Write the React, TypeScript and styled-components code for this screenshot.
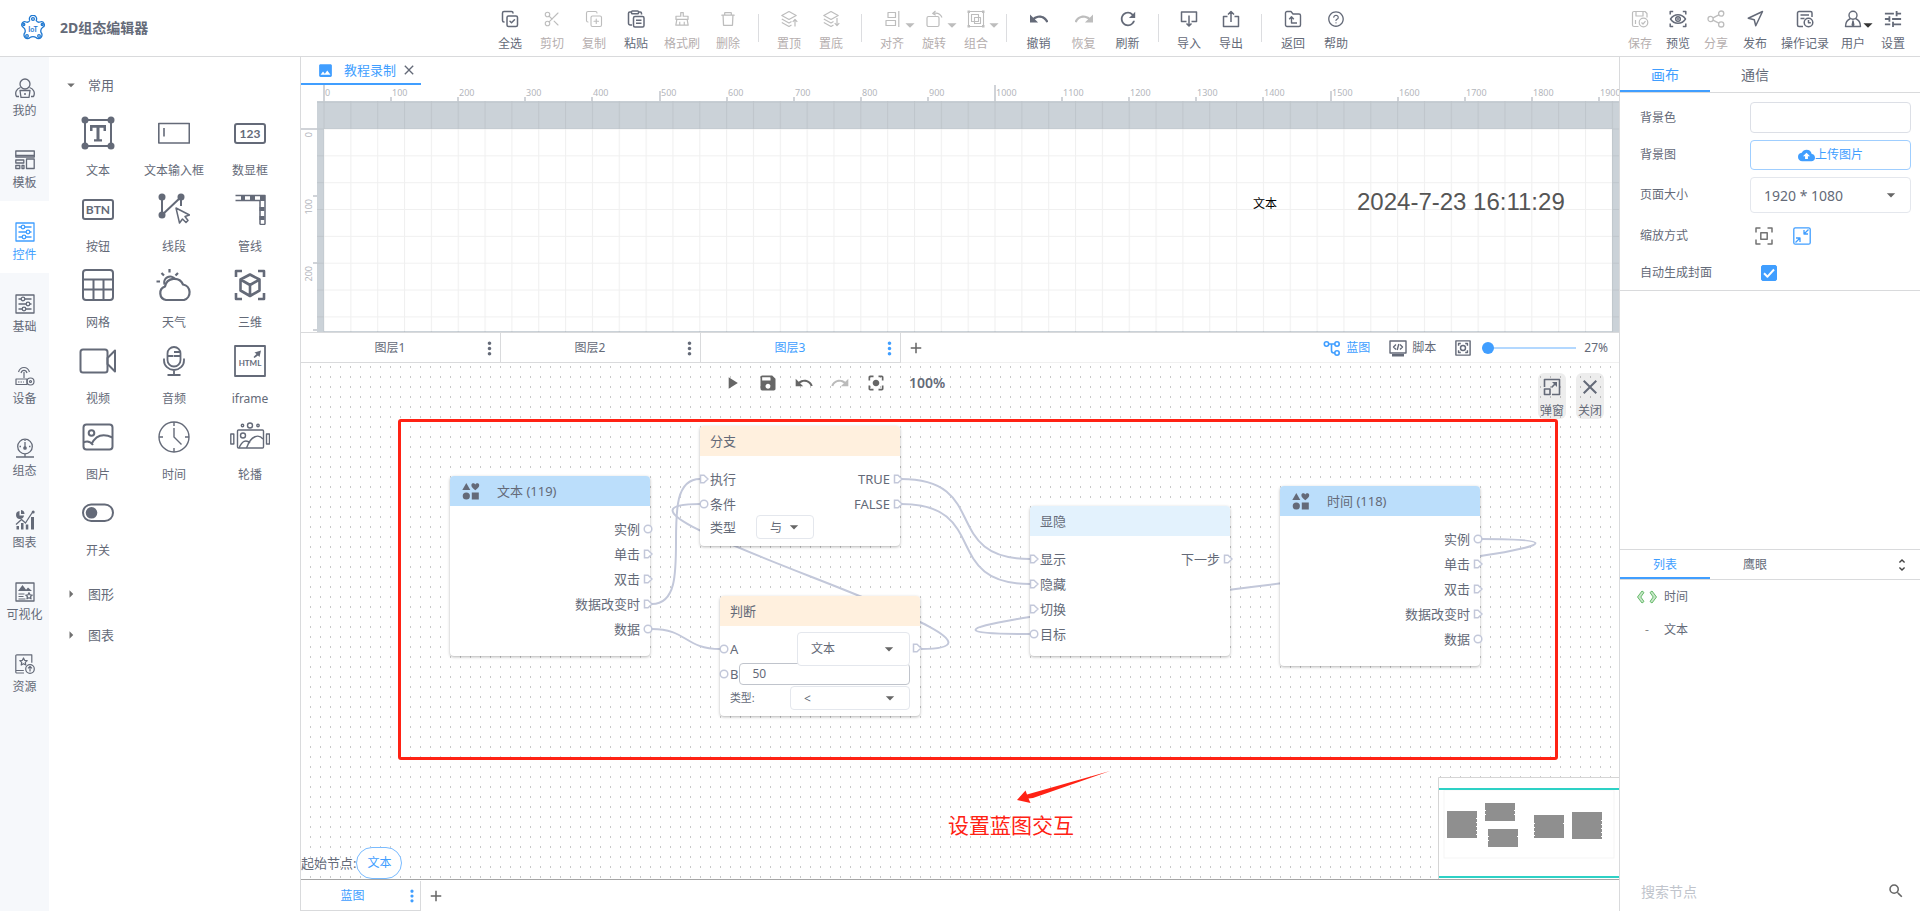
import React from "react";
import styled, { createGlobalStyle, css } from "styled-components";
import {
  MdUndo, MdRedo, MdRefresh, MdSave, MdPlayArrow, MdCloudUpload, MdSearch, MdUnfoldMore,
  MdImage, MdAdd, MdClose, MdMoreVert, MdCenterFocusStrong, MdTune, MdArrowDropDown, MdArrowRight,
} from "react-icons/md";
import { AiOutlineClear, AiOutlineDelete, AiOutlineQuestionCircle } from "react-icons/ai";
import { CopyCheck, CopyPlus, Scissors, Navigation } from "lucide-react";

const ink = "#646a78";
const blue = "#409eff";
const line = "#d9dadc";
const off = "#bdbdbd";
const wire = "#c3c8da";

const Global = createGlobalStyle`
  * { box-sizing: border-box; }
  html, body { margin: 0; background: #fff; }
  body, button, input, select { font-family: "Noto Sans", "Noto Sans CJK SC", sans-serif; color: ${ink}; }
  body { font-size: 12px; line-height: 18px; }
  button { background: none; border: 0; padding: 0; cursor: pointer; font-size: inherit; line-height: inherit; }
  button:disabled { cursor: default; }
  svg { display: block; flex: none; }
`;

/* ---------- icons ---------- */
const Stroke = styled.svg<{ $w?: number }>`
  fill: none;
  stroke: currentColor;
  stroke-width: ${(p) => p.$w ?? 1.4}px;
  stroke-linejoin: round;
  .solid { fill: currentColor; stroke: none; }
  .fill { fill: currentColor; }
  text { fill: currentColor; stroke: none; font-family: Lato, sans-serif; font-weight: 700; }
`;

type IconProps = { size?: number; box?: number; w?: number; children: React.ReactNode };
const Icon = ({ size = 18, box = 18, w, children }: IconProps) => (
  <Stroke width={size} height={size} viewBox={`0 0 ${box} ${box}`} $w={w} aria-hidden="true">{children}</Stroke>
);

const PasteIcon = () => (
  <Icon w={1.5}><path d="M5 15H3.2A1.7 1.7 0 0 1 1.5 13.300V3.200A1.200 1.200 0 0 1 2.700 2H4M12 2h1.300A1.200 1.200 0 0 1 14.500 3.200V4.500" /><rect x="4.500" y="1" width="7" height="2.800" rx=".8" /><rect x="6.500" y="6.500" width="10.500" height="10.500" rx="1.500" /><path d="M9 10.200h5.500M9 13.200h5.500" /></Icon>
);
const LayersIcon = ({ down }: { down?: boolean }) => (
  <Icon w={1.2}><path d="M9 1.500 1.800 5.500 9 9.500l7.200-4L9 1.500ZM1.800 9 9 13l2.500-1.400M1.800 12.500 9 16.500l2.500-1.400" /><path d={down ? "M15 8v7.500M12.700 13.200 15 15.500l2.300-2.300" : "M15 16.500V9.500M12.700 11.800 15 9.500l2.300 2.300"} /></Icon>
);
const AlignIcon = () => (<Icon w={1.200}><path d="M15.800 1v16M3 15.500h9.500v-5H3zM5 2.500h7.500v5H5z" /></Icon>);
const RotateIcon = () => (<Icon w={1.200}><rect x="2" y="6.500" width="12" height="10" rx="1.500" /><path d="M8 3.500c4-1 7.500.5 9 4M10.500 1 7.700 3.500l3 1.800" /></Icon>);
const GroupIcon = () => (<Icon w={1.100}><path d="M3 1.500h12M3 16.500h12M1.500 3v12M16.500 3v12" /><path className="solid" d="M.5.5h2.500V3H.5zM15 .5h2.500V3H15zM.5 15h2.500v2.500H.5zM15 15h2.500v2.500H15z" /><path d="M4.500 4.500h7v7h-7zM7.500 7.500h6v6h-6z" /></Icon>);
const ImportIcon = () => (<Icon w={1.500}><path d="M6.500 11.500H1.500V2h15v9.500h-5M9 5.500V16M6.500 13.500 9 16l2.500-2.500" /></Icon>);
const ExportIcon = () => (<Icon w={1.500}><path d="M5.500 6.500H1.500v10h15v-10h-4M9 12V1.800M6 4.500l3-3 3 3" /></Icon>);
const BackIcon = () => (<Icon w={1.400}><path d="M1.500 15V3A1.500 1.500 0 0 1 3 1.500h4L9 4h6a1.500 1.500 0 0 1 1.500 1.500V15a1.500 1.500 0 0 1-1.500 1.500H3A1.500 1.500 0 0 1 1.500 15Z" /><path d="M7.500 7v6H13M5.200 9.200 7.500 6.800l2.300 2.400" /></Icon>);
const SaveIcon = () => (<Icon w={1.200}><path d="M7.500 16.500H3A1.500 1.500 0 0 1 1.500 15V3A1.500 1.500 0 0 1 3 1.500h11L16 3.500v4M5 1.500V6h7V1.500M4.500 10v4" /><circle cx="12.500" cy="12.500" r="4.300" /><path d="m10.500 12.500 1.500 1.500 2.500-2.800" /></Icon>);
const PreviewIcon = () => (<Icon w={1.500}><path d="M1.200 4.500V1.500h3M13.800 1.500h3v3M16.800 13.500v3h-3M4.200 16.500h-3v-3" /><path d="M1.500 9C3.500 6 6 4.800 9 4.800S14.500 6 16.500 9c-2 3-4.500 4.200-7.500 4.200S3.500 12 1.500 9Z" /><circle cx="9" cy="9" r="2.300" /><circle className="solid" cx="9" cy="9" r="1" /></Icon>);
const ShareIcon = () => (<Icon w={1.300}><circle cx="3.600" cy="9" r="2.600" /><circle cx="14.200" cy="3.600" r="2.600" /><circle cx="14.200" cy="14.400" r="2.600" /><path d="M6 7.800 11.800 4.800M6 10.200l5.800 3" /></Icon>);
const LogIcon = () => (<Icon w={1.500}><path d="M7 16.500H3A1.500 1.500 0 0 1 1.500 15V3A1.500 1.500 0 0 1 3 1.500h11.500A1.500 1.500 0 0 1 16 3v4M4.500 5H13M4.500 8.500h4" /><circle cx="12.500" cy="12.500" r="4.300" /><path d="M12.500 10v2.800h2.300" /></Icon>);
const UserIcon = () => (<Icon w={1.400}><circle cx="9" cy="5.200" r="4" /><path d="M6.500 8.500C3.500 9.800 1.500 12 1.500 16.500h15c0-4.500-2-6.700-5-8" /><path className="fill" d="M9 11l-.8 4 .8.800.8-.8z" /></Icon>);

const PersonIcon = () => (<Icon size={20} box={20} w={1.300}><circle cx="10" cy="6" r="5" /><path d="M4 18.500H1.500C-.5 14.500 1.500 11 5.500 9.500M16 18.500h2.500c2-4 0-7.500-4-9" /><path d="M5 12.500h10l-1 7H6z" /><circle className="solid" cx="10" cy="16" r="1" /></Icon>);
const TemplateIcon = () => (<Icon size={20} box={20} w={1.300}><rect x=".8" y="1" width="18.500" height="6" /><path d="M.8 5.500h18.500M.8 10h8v3h-8zM.8 15.500h4v3h-4zM7 15.500h2v3H7zM11.500 9h7.700v9.500h-7.700z" /></Icon>);
const SlidersIcon = () => (<Icon size={20} box={20} w={1.300}><path d="M1 1h18v18H1zM3.500 5h3M10 5h6.500M3.500 10h7.500M15 10h1.500M3.500 15h4M11 15h5.500" /><circle cx="8" cy="5" r="1.800" /><circle cx="13" cy="10" r="1.800" /><circle cx="9" cy="15" r="1.800" /></Icon>);
const DeviceIcon = () => (<Icon size={20} box={20} w={1.200}><path d="M3.500 6C5.500 0 12.500 0 14.500 6M6 7c1-3.500 5-3.500 6 0M9 6v6M1 13h11v5.500H1z" /><path d="M3 16h6" strokeDasharray="1.500 1" /><circle cx="15.500" cy="15.500" r="3.500" /><circle cx="15.500" cy="15.500" r="1" /></Icon>);
const GaugeIcon = () => (<Icon size={20} box={20} w={1.300}><circle cx="10" cy="8.500" r="7.300" /><path d="M10 4v5M10 3v-1M4.500 8.500h1.500M14 8.500h1.500M1 19h18M10 16v3" /><circle cx="10" cy="10" r="1.200" className="fill" /></Icon>);
const ChartIcon = () => (<Icon size={20} box={20} w={1.300}><path className="solid" d="M4.500 1A4 4 0 1 0 9 5.500H4.500zM6 0v4h3.500A4 4 0 0 0 6 0zM1.500 16h2.500v3.500H1.500zM6 13h2.500v6.500H6zM10.800 14.500h2.500v5h-2.500zM16 7h3v12.500h-3z" /><path d="M1 14.500 6.500 9.500l4 3.500L14 7.500l4-6" /><circle className="solid" cx="18.200" cy="2" r="1.500" /></Icon>);
const VisualIcon = () => (<Icon size={20} box={20} w={1.300}><path d="M1 1h18v18H1z" /><path className="solid" d="M3 9l4.500-6L12 9zM10 9l3-3.500L17 9zM3.500 11.500h6v1h-6zM3.500 14h5v1h-5zM3.500 16.500h7v1h-7z" /><path d="m14 10.800 1 2 2.200.3-1.600 1.500.4 2.200-2-1.100-2 1.100.4-2.200-1.600-1.500 2.200-.3z" /></Icon>);
const ResourceIcon = () => (<Icon size={20} box={20} w={1.200}><path d="M9 19H1.500A1 1 0 0 1 .8 18V1.800A1 1 0 0 1 1.800.8h15v8M.8 16.500h8" /><path d="m8.500 4 1.100 2.300 2.600.3-1.900 1.800.5 2.600-2.300-1.300L6.200 11l.5-2.600-1.900-1.800 2.600-.3z" /><circle cx="15" cy="15" r="4.300" /><path d="M15 17.500v-5M13 14.300l2-2 2 2" /></Icon>);

const W = ({ w = 2, children }: { w?: number; children: React.ReactNode }) => <Icon size={32} box={32} w={w}>{children}</Icon>;
const widgets: { name: string; icon: React.ReactNode }[] = [
  { name: "文本", icon: <Icon size={34} box={34} w={2}><path d="M4 4h26v26H4z" /><g className="solid"><circle cx="4" cy="4" r="3.500" /><circle cx="30" cy="4" r="3.500" /><circle cx="4" cy="30" r="3.500" /><circle cx="30" cy="30" r="3.500" /></g><path className="solid" d="M9 9h16v6h-2.500v-3.200h-4v11.400h2.500V25.500h-8v-2.300h2.500V11.800h-4V15H9z" /></Icon> },
  { name: "文本输入框", icon: <W w={1.600}><path d="M.8 6.500h30.500v19.500H.8zM6 11v8.500" /></W> },
  { name: "数显框", icon: <W><rect x="1" y="7" width="30" height="19" rx="2" /><text x="16" y="21" fontSize="12" textAnchor="middle">123</text></W> },
  { name: "按钮", icon: <W><rect x="1" y="7" width="30" height="19" rx="2" /><text x="16" y="21" fontSize="12" textAnchor="middle">BTN</text></W> },
  { name: "线段", icon: <W w={2}><path d="M4 4v18L23 4v9" /><g className="solid"><circle cx="4" cy="4" r="3.500" /><circle cx="23" cy="4" r="3.500" /><circle cx="4" cy="22" r="3.500" /></g><path d="m18 15 3.500 15 3-4 3.500 3.500 2-2-3-4 4.500-1.500z" fill="#fff" strokeWidth="1.500" /></W> },
  { name: "管线", icon: <W w={1.500}><path d="M1.500 2.500H31v29M1.500 7.500h24.500v24" /><path d="M26 31.500h5" /><path className="solid" d="M7 2h4v6H7zM16 2h5v6h-5zM26 2h5v6h-5zM25.500 14h5v4h-5zM25.500 23h5v4h-5z" /></W> },
  { name: "网格", icon: <W><rect x="1" y="1" width="30" height="30" rx="3" /><path d="M1 10.500h30M1 20.500h30M11.500 10.500V31M21.500 10.500V31" /></W> },
  { name: "天气", icon: <Icon size={36} box={36} w={2.200}><path d="M10 33a7 7 0 0 1-1-13.500A9.500 9.500 0 0 1 27 17.500a8 8 0 0 1 1 15.500z" /><path d="M8.500 17.500a6 6 0 0 1 10.500-5.500M13.500 2v3.500M5.500 6l2.500 2.500M22 6l-2.500 2.500M.5 14.500H4" /></Icon> },
  { name: "三维", icon: <W w={2.600}><path d="M2 8V2h6M24 2h6v6M30 24v6h-6M8 30H2v-6" /><path d="m16 5.500 9.500 5v11L16 27l-9.500-5.500v-11zM6.500 10.500 16 16l9.500-5.500M16 16v11" /></W> },
  { name: "视频", icon: <Icon size={38} box={38} w={2}><rect x="1.500" y="7.500" width="27" height="23" rx="2.500" /><path d="m28.500 16 7.500-7.500v21L28.500 22z" /></Icon> },
  { name: "音频", icon: <W w={1.800}><rect x="9.500" y="2" width="13" height="19.500" rx="6.500" /><path d="M6 13.500v2a10 9.500 0 0 0 20 0v-2M16 25v4.500M9.500 30h13M9.500 11h6M16 11h6M16 7h6" /></W> },
  { name: "iframe", icon: <W w={1.800}><path d="M1 1h30v30H1z" /><text x="16" y="21" fontSize="8" textAnchor="middle">HTML</text><path className="solid" d="M20.500 7.500 27 5.500l-1.500 6.500-1.500-1.500-3.500 2.500-1-1 3-3z" /></W> },
  { name: "图片", icon: <W><rect x="1.500" y="3.500" width="29" height="25" rx="3" /><circle cx="9.500" cy="12" r="2.800" /><path d="M1.500 21.500C5 19.500 8 20 11 24M9.500 23C14 14 21 12 30.500 16.500" /></W> },
  { name: "时间", icon: <W w={1.400}><circle cx="16" cy="16" r="15" /><path d="M16 1v4M16 27v4M1 16h4M27 16h4M16 7v9l7.500 7.500" /></W> },
  { name: "轮播", icon: <Icon size={40} box={40} w={1.400}><rect x="7.500" y="13" width="26" height="18" rx="1" /><path d="M.8 17h3v10h-3zM36.500 17h3v10h-3zM9 31c3-7 7-9 11-5M16.500 31C21 18 29 17 33 22" /><circle cx="13" cy="18.500" r="2.500" /><circle cx="20" cy="8.500" r="2.500" /><circle cx="12.500" cy="8.500" r="1.200" /><circle cx="28" cy="8.500" r="1.200" /></Icon> },
  { name: "开关", icon: <W><rect x="1" y="7.500" width="30" height="16.500" rx="8.200" /><circle className="solid" cx="9.500" cy="15.800" r="5.800" /></W> },
];

const ShapesIcon = () => (
  <Icon size={18} box={18}><path className="solid" d="M4.300 1 8.300 8H.3zM13.300 8.200C10.500 6 9.400 5 9.400 3.200 9.400 1 12.300.6 13.300 2.600c1-2 3.900-1.600 3.900.6 0 1.800-1.100 2.800-3.900 5zM9.800 10.500h7v7h-7z" /><circle className="solid" cx="4.300" cy="14" r="3.600" /></Icon>
);
const FlowIcon = () => (<Icon w={1.600}><circle cx="3.500" cy="5" r="2.200" /><circle cx="14" cy="5" r="2.200" /><circle cx="14" cy="14" r="2.200" /><path d="M5.700 5h6M8.500 5v6.500a2.500 2.500 0 0 0 2.500 2.500h1" /></Icon>);
const ScriptIcon = () => (<Icon w={1.400}><path d="M1 2h16v12H1zM7 5.500 4.500 8 7 10.500M11 5.500 13.500 8 11 10.500M9.800 5l-1.600 6" /><path className="solid" d="M3 15h12v2.500H3z" /></Icon>);
const FitIcon = () => (<Icon size={16} box={18} w={1.600}><path d="M1 1h16v16H1z" /><circle cx="9" cy="9" r="2.800" /><path d="M4 6.500V4h2.500M11.500 4H14v2.500M14 11.500V14h-2.500M6.500 14H4v-2.500" /></Icon>);

/* ---------- shell ---------- */
const Page = styled.div`display: flex; flex-direction: column; height: 100vh; min-height: 720px; overflow: hidden;`;
const Header = styled.header`
  display: grid; grid-template-columns: 489px 1fr auto; height: 57px; flex: none; border-bottom: 1px solid ${line};
`;
const Brand = styled.div`display: flex; align-items: center; gap: 14px; padding: 0 20px; h1 { font-size: 14px; line-height: 20px; margin: 0; }`;
const Tools = styled.nav`display: flex; align-items: flex-start;`;
const Actions = styled(Tools)`padding-right: 5px;`;
const Divider = styled.span`width: 1px; height: 28px; margin: 14px 9px 0; background: #dcdde0;`;
const Tool = styled.button<{ $w?: number }>`
  position: relative; display: flex; flex-direction: column; align-items: center; gap: 7px;
  width: ${(p) => p.$w ?? 42}px; padding-top: 10px; white-space: nowrap;
  &:disabled { color: ${off}; }
  &:disabled span { color: #b5aeae; }
`;
const Caret = styled(MdArrowDropDown)`position: absolute; right: -8px; top: 14px;`;
const Body = styled.div`display: flex; flex: 1; min-height: 0;`;

const Rail = styled.nav`width: 49px; flex: none; background: #f6f8fb;`;
const RailItem = styled.button<{ $on?: boolean }>`
  display: flex; flex-direction: column; align-items: center; gap: 4px; width: 100%; height: 72px; padding-top: 21px;
  ${(p) => p.$on && css`background: #fff; color: ${blue};`}
`;

const Library = styled.aside`width: 252px; flex: none; border-right: 1px solid ${line};`;
const Category = styled.button`
  display: flex; align-items: center; gap: 8px; width: 100%; height: 41px; padding-left: 13px; font-size: 13px;
  svg { color: #707070; }
`;
const LibraryTop = styled.div`padding-top: 7px;`;
const WidgetGrid = styled.div`display: grid; grid-template-columns: repeat(3, 76px); padding: 8px 10px 4px 11px;`;
const Widget = styled.button`
  display: flex; flex-direction: column; align-items: center; height: 76px;
  span { display: flex; align-items: center; justify-content: center; height: 40px; margin-bottom: 9px; }
`;

const Main = styled.main`display: flex; flex-direction: column; flex: 1; min-width: 0;`;
const FileTab = styled.div`
  display: flex; align-items: center; width: 120px; height: 28px; flex: none; padding-left: 16px; border-bottom: 2px solid ${blue};
  color: ${blue}; font-size: 13px; white-space: nowrap;
  span { margin-left: 10px; }
`;
const CloseFile = styled.button`margin: 0 4px 0 auto;`;

/* ---------- stage ---------- */
const Stage = styled.section`display: flex; flex-direction: column; flex: 12 1 0; min-height: 0; border-bottom: 1px solid ${line};`;
const StageRow = styled.div`display: flex; flex: 1; min-height: 0;`;
const RulerSvg = styled.svg`
  rect { fill: #d0d3d8; }
  text { fill: #b4b6bc; font-size: 9px; }
`;
const Board = styled.div`position: relative; display: flex; flex: 1; padding: 28px 7px 1px; background: #cbd2d8;`;
const Sheet = styled.div`flex: 1; background: #fff;`;
const GridOverlay = styled.svg`position: absolute; inset: 0; width: 100%; height: 100%;`;
const StageText = styled.span`position: absolute; left: 936px; top: 94px; color: #000;`;
const StageClock = styled.time`position: absolute; left: 1040px; top: 86px; font: 24px/30px "Liberation Sans", sans-serif; color: #555;`;

const STEP = 67.1;
const TopRuler = () => (
  <RulerSvg width="100%" height="16">
    {Array.from({ length: 20 }, (_, i) => {
      const x = Math.round(22 + i * STEP);
      const h = i % 10 === 0 ? 16 : i % 5 === 0 ? 10 : 4;
      return <g key={i}><rect x={x} y={16 - h} width="2" height={h} /><text x={x + 2} y="11">{i * 100}</text></g>;
    })}
  </RulerSvg>
);
const SideRuler = () => (
  <RulerSvg width="16" height="100%">
    {Array.from({ length: 4 }, (_, i) => {
      const y = Math.round(27 + i * STEP);
      const w = i === 0 ? 16 : 4;
      return (
        <g key={i}>
          <rect x={16 - w} y={y} width={w} height="2" />
          {i < 3 && <text transform={`translate(11 ${y + 4}) rotate(-90)`} textAnchor="end">{i * 100}</text>}
        </g>
      );
    })}
  </RulerSvg>
);

/* ---------- layer bar ---------- */
const LayerBar = styled.div`display: flex; align-items: center; height: 30px; flex: none; border-bottom: 1px solid #f0f0f0;`;
const TabCell = styled.div<{ $w: number; $on?: boolean }>`
  display: flex; align-items: center; width: ${(p) => p.$w}px; height: 30px; padding-top: 2px; border-right: 1px solid ${line}; border-bottom: 1px solid ${line};
  color: ${(p) => (p.$on ? blue : ink)};
  button { color: inherit; }
  button:first-child { flex: 1; }
`;
const AddButton = styled.button`margin-left: 6px; color: #666;`;
const BarTools = styled.div`display: flex; align-items: center; margin-left: auto; padding: 1px 11px 0 0;`;
const BarTool = styled.button<{ $on?: boolean }>`
  display: flex; align-items: center; gap: 5px; margin-right: 19px; color: ${(p) => (p.$on ? blue : ink)};
`;
const Zoom = styled.input`
  appearance: none; width: 94px; height: 12px; margin: 0 8px 0 -8px; background: linear-gradient(#b3d8ff, #b3d8ff) center / 100% 2px no-repeat;
  &::-webkit-slider-thumb { appearance: none; width: 12px; height: 12px; border-radius: 50%; background: ${blue}; }
`;

/* ---------- blueprint ---------- */
const Blueprint = styled.section`position: relative; flex: 25 1 0; min-height: 0; overflow: hidden; border-bottom: 1px solid #a5a5a5;`;
const Wires = styled.svg`
  position: absolute; inset: 0; width: 100%; height: 100%;
  path { fill: none; stroke: ${wire}; stroke-width: 2px; }
  pattern rect { fill: #c9c9c9; }
`;
const CanvasTools = styled.div`
  position: absolute; left: 421px; top: 10px; display: flex; align-items: center; gap: 16px; color: #666;
  button { color: inherit; }
  button:disabled { color: #bbb; }
  strong { margin-left: 7px; font-size: 14px; line-height: 20px; font-weight: 600; color: ${ink}; }
`;
const CornerTools = styled.div`position: absolute; right: 15px; top: 10px; display: flex; gap: 10px;`;
const CornerTool = styled.button`
  display: flex; flex-direction: column; align-items: center; gap: 6px; width: 28px; height: 46px; padding-top: 5px; border-radius: 6px; background: rgba(0, 0, 0, 0.07);
`;
const NodeCard = styled.article<{ $x: number; $y: number; $h: number }>`
  position: absolute; left: ${(p) => p.$x}px; top: ${(p) => p.$y}px; width: 200px; min-height: ${(p) => p.$h}px;
  background: #fff; border-radius: 4px; box-shadow: 0 1px 3px rgba(0, 0, 0, 0.3); font-size: 13px;
`;
const NodeHead = styled.header<{ $tone: string }>`
  display: flex; align-items: center; gap: 17px; height: 30px; padding: 0 10px; background: ${(p) => p.$tone}; border-radius: 4px 4px 0 0;
`;
const ElementHead = styled(NodeHead)`padding-left: 12px;`;
const NodeBody = styled.div`display: flex; justify-content: space-between; padding-top: 10px;`;
const Ports = styled.div<{ $end?: boolean }>`
  display: flex; flex-direction: column; align-items: ${(p) => (p.$end ? "flex-end" : "stretch")};
  margin: ${(p) => (p.$end ? "0 -3px 0 0" : "0 0 0 -1px")};
`;
const PortRow = styled.div`display: flex; align-items: center; height: 25px; svg { margin-right: 1px; }`;
const OutRow = styled(PortRow)`gap: 3px; svg { margin: 0; }`;
const SettingRow = styled.div`display: flex; align-items: center; height: 24px; padding: 0 10px; justify-content: space-between;`;
const BranchRow = styled(SettingRow)`height: 22px; justify-content: flex-start; gap: 20px; svg { right: 6px; }`;
const PortShape = styled.svg`fill: #fff; stroke: ${wire}; stroke-width: 1.5px;`;
const Port = ({ kind }: { kind: "data" | "flow" }) => (
  <PortShape width="10" height="10" viewBox="0 0 10 10">
    {kind === "data" ? <circle cx="5" cy="5" r="3.800" /> : <path d="M1.500 1.200h3.500L9 5 5 8.800H1.500z" />}
  </PortShape>
);
type P = [string, "data" | "flow"];
const InPort = ({ p }: { p: P }) => <PortRow><Port kind={p[1]} /><span>{p[0]}</span></PortRow>;
const OutPorts = ({ list }: { list: P[] }) => (
  <Ports $end>{list.map((p) => <OutRow key={p[0]}><span>{p[0]}</span><Port kind={p[1]} /></OutRow>)}</Ports>
);

const SelectBox = styled.label<{ $w: string; $h: number; $size?: number }>`
  position: relative; display: flex; align-items: center; width: ${(p) => p.$w}; height: ${(p) => p.$h}px; flex: none;
  border: 1px solid #e4e7ed; border-radius: 4px; background: #fff;
  select { appearance: none; width: 100%; height: 100%; border: 0; background: none; outline: 0; padding: 0 24px 0 13px; font-size: ${(p) => p.$size ?? 12}px; }
  svg { position: absolute; right: 9px; color: #666; pointer-events: none; }
`;
const Select = ({ name, value, w, h, size }: { name: string; value: string; w: string; h: number; size?: number }) => (
  <SelectBox $w={w} $h={h} $size={size}>
    <select aria-label={name} defaultValue={value}><option>{value}</option></select>
    <MdArrowDropDown size={20} />
  </SelectBox>
);
const JudgeBody = styled.div`padding: 10px 10px 0 0; margin-left: -1px;`;
const JudgeRow = styled(PortRow)``;
const Push = styled.div`display: flex; margin-left: auto;`;
const ValueInput = styled.input`flex: 1; min-width: 0; height: 22px; margin-left: 1px; padding: 0 12px; border: 1px solid #c0c4cc; border-radius: 4px; font-size: 12px; background: #fff;`;
const JudgeOut = styled.div`position: absolute; right: -2px; top: 47px;`;

const Frame = styled.div`position: absolute; left: 97px; top: 56px; width: 1160px; height: 341px; border: 3px solid #ff2214; border-radius: 3px; pointer-events: none;`;
const NoteArrow = styled.svg`position: absolute; left: 714px; top: 406px; fill: #ff2214;`;
const Note = styled.p`position: absolute; left: 647px; top: 447px; margin: 0; font-size: 21px; line-height: 30px; color: #ff2214;`;
const StartNode = styled.div`position: absolute; left: 0; bottom: 0; display: flex; align-items: center; font-size: 13px;`;
const Pill = styled.button`width: 46px; height: 32px; border: 1px solid #79bbff; border-radius: 16px; color: ${blue}; background: #fff; font-size: 12px;`;
const MiniMap = styled.svg`position: absolute; right: 0; bottom: 0; background: #fff;`;

const ElementNode = ({ x, y, title }: { x: number; y: number; title: string }) => (
  <NodeCard $x={x} $y={y} $h={180}>
    <ElementHead $tone="#bbdefb"><ShapesIcon />{title}</ElementHead>
    <NodeBody><span /><OutPorts list={[["实例", "data"], ["单击", "flow"], ["双击", "flow"], ["数据改变时", "flow"], ["数据", "data"]]} /></NodeBody>
  </NodeCard>
);

const BottomBar = styled.div`display: flex; align-items: center; height: 31px; flex: none;`;

/* ---------- right panel ---------- */
const Side = styled.aside`display: flex; flex-direction: column; width: 301px; flex: none; border-left: 1px solid ${line};`;
const Props = styled.section`flex: 15 1 0; min-height: 0;`;
const List = styled.section`display: flex; flex-direction: column; flex: 11 1 0; min-height: 0; border-top: 1px solid ${line};`;
const Tabs = styled.div<{ $h: number; $size: number }>`
  display: flex; align-items: stretch; height: ${(p) => p.$h}px; flex: none; border-bottom: 1px solid ${line}; font-size: ${(p) => p.$size}px;
`;
const Tab = styled.button<{ $on?: boolean }>`
  width: 90px; padding-top: 2px; border-bottom: 2px solid ${(p) => (p.$on ? blue : "transparent")}; color: ${(p) => (p.$on ? blue : ink)};
`;
const Expand = styled.button`margin-left: auto; padding-right: 10px; color: #444;`;
const Form = styled.div`display: flex; flex-direction: column; gap: 7px; padding: 9px 9px 3px 20px; border-bottom: 1px solid ${line};`;
const Field = styled.div<{ $h: number }>`
  display: grid; grid-template-columns: 110px 1fr; align-items: center; height: ${(p) => p.$h}px;
`;
const ColorInput = styled.input`width: 100%; height: 31px; border: 1px solid #dcdfe6; border-radius: 4px; background: #fff;`;
const Upload = styled.button`display: flex; align-items: center; justify-content: center; width: 100%; height: 30px; border: 1px solid #9fceff; border-radius: 4px; color: ${blue};`;
const ScaleModes = styled.div`display: flex; gap: 20px; padding-left: 5px;`;
const ScaleMode = styled.button<{ $on?: boolean }>`color: ${(p) => (p.$on ? blue : "#737373")};`;
const CheckWrap = styled.span`
  position: relative; width: 16px; height: 16px; margin-left: 11px;
  input { appearance: none; display: block; width: 16px; height: 16px; margin: 0; border: 1px solid ${blue}; border-radius: 2px; background: #fff; }
  input:checked { background: ${blue}; }
  svg { position: absolute; inset: 0; color: #fff; pointer-events: none; }
`;
const Items = styled.ul`list-style: none; margin: 0; padding: 0; flex: 1;`;
const Item = styled.li`display: flex; align-items: center; gap: 6px; height: 33px; padding-left: 16px; i { width: 22px; text-align: center; font-style: normal; color: #888; }`;
const CodeMark = styled.svg`fill: #c8e6c9; stroke: #66bb6a; stroke-width: 1px;`;
const SearchBox = styled.label`
  display: flex; align-items: center; height: 40px; padding: 0 15px 0 21px; color: #666;
  input { flex: 1; min-width: 0; border: 0; outline: 0; padding: 0; font-size: 14px; }
  input::placeholder { color: #c0c4cc; }
`;

type ToolDef = { name: string; icon: React.ReactNode; disabled?: boolean; w?: number; menu?: boolean };
const ToolItem = ({ name, icon, disabled, w, menu }: ToolDef) => (
  <Tool disabled={disabled} $w={w}>{icon}<span>{name}</span>{menu && <Caret size={22} color={disabled ? off : "#333"} />}</Tool>
);

/* Material glyphs carry inner padding, so they are drawn from a tighter view box. */
const tight = "2 2 20 20";
const groups: ToolDef[][] = [
  [
    { name: "全选", icon: <CopyCheck size={18} strokeWidth={2} /> },
    { name: "剪切", icon: <Scissors size={18} strokeWidth={1.500} />, disabled: true },
    { name: "复制", icon: <CopyPlus size={18} strokeWidth={1.500} />, disabled: true },
    { name: "粘贴", icon: <PasteIcon /> },
    { name: "格式刷", icon: <AiOutlineClear size={18} />, disabled: true, w: 50 },
    { name: "删除", icon: <AiOutlineDelete size={18} />, disabled: true },
  ],
  [
    { name: "置顶", icon: <LayersIcon />, disabled: true },
    { name: "置底", icon: <LayersIcon down />, disabled: true },
  ],
  [
    { name: "对齐", icon: <AlignIcon />, disabled: true, menu: true },
    { name: "旋转", icon: <RotateIcon />, disabled: true, menu: true },
    { name: "组合", icon: <GroupIcon />, disabled: true, menu: true },
  ],
  [
    { name: "撤销", icon: <MdUndo size={18} viewBox={tight} />, w: 45 },
    { name: "恢复", icon: <MdRedo size={18} viewBox={tight} />, disabled: true, w: 45 },
    { name: "刷新", icon: <MdRefresh size={18} viewBox={tight} />, w: 43 },
  ],
  [{ name: "导入", icon: <ImportIcon /> }, { name: "导出", icon: <ExportIcon /> }],
  [{ name: "返回", icon: <BackIcon />, w: 44 }, { name: "帮助", icon: <AiOutlineQuestionCircle size={18} /> }],
];
const actions: ToolDef[] = [
  { name: "保存", icon: <SaveIcon />, disabled: true, w: 38 },
  { name: "预览", icon: <PreviewIcon />, w: 38 },
  { name: "分享", icon: <ShareIcon />, disabled: true, w: 38 },
  { name: "发布", icon: <Navigation size={18} />, w: 40 },
  { name: "操作记录", icon: <LogIcon />, w: 60 },
  { name: "用户", icon: <UserIcon />, w: 36, menu: true },
  { name: "设置", icon: <MdTune size={18} viewBox={tight} />, w: 44 },
];

const rail = [
  { name: "我的", icon: <PersonIcon /> }, { name: "模板", icon: <TemplateIcon /> }, { name: "控件", icon: <SlidersIcon /> },
  { name: "基础", icon: <SlidersIcon /> }, { name: "设备", icon: <DeviceIcon /> }, { name: "组态", icon: <GaugeIcon /> },
  { name: "图表", icon: <ChartIcon /> }, { name: "可视化", icon: <VisualIcon /> }, { name: "资源", icon: <ResourceIcon /> },
];

const LogoSvg = styled.svg`
  fill: none; stroke: #1f78d1; stroke-width: 1.300px;
  text { fill: #1f78d1; stroke: none; font: 700 7px Lato, sans-serif; }
`;
const Logo = () => (
  <LogoSvg width="26" height="26" viewBox="0 0 26 26" aria-hidden="true">
    <path d="M9.800 5.500A3.600 3.600 0 1 1 16.200 5.500C17 7 18.500 7.500 20 7A3 3 0 1 1 22.500 12.500C21 13.500 20.500 15.500 21 17.500A3.300 3.300 0 1 1 16 22.500C14.500 21.500 11.500 21.500 10 22.500A3.300 3.300 0 1 1 5 17.500C5.500 15.500 5 13.500 3.500 12.500A3 3 0 1 1 6 7C7.500 7.500 9 7 9.800 5.500" />
    <circle cx="13" cy="4" r="1.400" /><circle cx="3.800" cy="9.500" r="1" /><circle cx="22.200" cy="9.500" r="1" /><circle cx="7" cy="21" r="1.300" /><circle cx="19" cy="21" r="1.300" />
    <text x="13" y="16.500" textAnchor="middle">IoT</text>
  </LogoSvg>
);

export default function App() {
  return (
    <Page>
      <Global />
      <Header>
        <Brand><Logo /><h1>2D组态编辑器</h1></Brand>
        <Tools aria-label="编辑">
          {groups.map((g, i) => (
            <React.Fragment key={i}>{i > 0 && <Divider />}{g.map((t) => <ToolItem key={t.name} {...t} />)}</React.Fragment>
          ))}
        </Tools>
        <Actions>{actions.map((t) => <ToolItem key={t.name} {...t} />)}</Actions>
      </Header>
      <Body>
        <Rail>{rail.map((r) => <RailItem key={r.name} $on={r.name === "控件"}>{r.icon}<span>{r.name}</span></RailItem>)}</Rail>
        <Library>
          <LibraryTop><Category><MdArrowDropDown size={18} />常用</Category></LibraryTop>
          <WidgetGrid>{widgets.map((w) => <Widget key={w.name}><span>{w.icon}</span>{w.name}</Widget>)}</WidgetGrid>
          <Category><MdArrowRight size={18} />图形</Category>
          <Category><MdArrowRight size={18} />图表</Category>
        </Library>

        <Main>
          <FileTab><MdImage size={17} /><span>教程录制</span><CloseFile aria-label="close"><MdClose size={16} /></CloseFile></FileTab>
          <Stage>
            <TopRuler />
            <StageRow>
              <SideRuler />
              <Board>
                <Sheet />
                <GridOverlay>
                  <defs><pattern id="cells" x="6.500" y="27.500" width="26.840" height="26.840" patternUnits="userSpaceOnUse"><path d="M0 .5h27M.5 0v27" stroke="rgba(0,0,0,.06)" /></pattern></defs>
                  <rect width="100%" height="100%" fill="url(#cells)" />
                </GridOverlay>
                <StageText>文本</StageText>
                <StageClock>2024-7-23 16:11:29</StageClock>
              </Board>
            </StageRow>
          </Stage>

          <LayerBar>
            {["图层1", "图层2", "图层3"].map((n) => (
              <TabCell key={n} $w={200} $on={n === "图层3"}><button>{n}</button><button aria-label="menu"><MdMoreVert size={21} /></button></TabCell>
            ))}
            <AddButton aria-label="add"><MdAdd size={18} /></AddButton>
            <BarTools>
              <BarTool $on><FlowIcon />蓝图</BarTool>
              <BarTool><ScriptIcon />脚本</BarTool>
              <BarTool aria-label="fit"><FitIcon /></BarTool>
              <Zoom type="range" min={0} max={100} defaultValue={0} aria-label="zoom" />
              <span>27%</span>
            </BarTools>
          </LayerBar>

          <Blueprint>
            <Wires>
              <defs><pattern id="dots" x="9" y="3" width="10" height="10" patternUnits="userSpaceOnUse"><rect width="1" height="2" /></pattern></defs>
              <rect width="100%" height="100%" fill="url(#dots)" />
              <path d="M351 241C399 241 351 116 399 116" />
              <path d="M351 266C386 266 384 286 419 286" />
              <path d="M620 286C770 286 249 141 399 141" />
              <path d="M600 116C690 116 639 196 729 196" />
              <path d="M600 141C690 141 639 221 729 221" />
              <path d="M1180 176C1480 176 429 271 729 271" />
            </Wires>

            <ElementNode x={149} y={113} title="文本 (119)" />
            <NodeCard $x={399} $y={63} $h={120}>
              <NodeHead $tone="#fff0de">分支</NodeHead>
              <NodeBody>
                <Ports><InPort p={["执行", "flow"]} /><InPort p={["条件", "data"]} /></Ports>
                <OutPorts list={[["TRUE", "flow"], ["FALSE", "flow"]]} />
              </NodeBody>
              <BranchRow><span>类型</span><Select name="类型" value="与" w="58px" h={24} /></BranchRow>
            </NodeCard>
            <NodeCard $x={419} $y={233} $h={120}>
              <NodeHead $tone="#fff0de">判断</NodeHead>
              <JudgeBody>
                <JudgeRow><Port kind="data" />A<Push><Select name="A" value="文本" w="113px" h={34} /></Push></JudgeRow>
                <JudgeRow><Port kind="data" />B<ValueInput aria-label="B" defaultValue="50" /></JudgeRow>
              </JudgeBody>
              <SettingRow><small>类型:</small><Select name="类型" value="<" w="120px" h={24} /></SettingRow>
              <JudgeOut><Port kind="flow" /></JudgeOut>
            </NodeCard>
            <NodeCard $x={729} $y={143} $h={150}>
              <NodeHead $tone="#e3f2fd">显隐</NodeHead>
              <NodeBody>
                <Ports><InPort p={["显示", "flow"]} /><InPort p={["隐藏", "flow"]} /><InPort p={["切换", "flow"]} /><InPort p={["目标", "data"]} /></Ports>
                <OutPorts list={[["下一步", "flow"]]} />
              </NodeBody>
            </NodeCard>
            <ElementNode x={979} y={123} title="时间 (118)" />

            <CanvasTools>
              <button aria-label="run"><MdPlayArrow size={20} /></button>
              <button aria-label="save"><MdSave size={20} /></button>
              <button aria-label="undo"><MdUndo size={20} /></button>
              <button aria-label="redo" disabled><MdRedo size={20} /></button>
              <button aria-label="center"><MdCenterFocusStrong size={20} /></button>
              <strong>100%</strong>
            </CanvasTools>
            <CornerTools>
              <CornerTool><Icon w={1.600}><path d="M1.500 9V1.500h15v15H9M1.500 11h5.500v5.500H1.500z" /><path d="M8.500 9.500 13 5" /><path className="solid" d="M14 4v5l-5-5z" /></Icon>弹窗</CornerTool>
              <CornerTool><MdClose size={18} viewBox="3 3 18 18" />关闭</CornerTool>
            </CornerTools>

            <StartNode>起始节点:<Pill>文本</Pill></StartNode>
            <MiniMap width="181" height="102" viewBox="0 0 181 102">
              <path d="M.5 102V.5H181" fill="none" stroke="#d5d5d5" />
              <rect x="6" y="13" width="170" height="68" fill="#fff" stroke="#f5f5f5" />
              <path d="M1 12h180M1 100h180" stroke="#2dd1c5" strokeWidth="2" />
              <g fill="#8f8f8f"><rect x="9" y="34" width="30" height="27" /><rect x="47" y="26" width="30" height="18" /><rect x="50" y="52" width="30" height="18" /><rect x="96" y="38" width="30" height="23" /><rect x="134" y="35" width="30" height="27" /></g>
              <g stroke="#fff" strokeDasharray="1 3"><path d="M38.500 41v18M76.500 33v8M47.500 33v8M50.500 59v8M79.500 59v3M96.500 46v13M125.500 46v2M163.500 43v17" /></g>
            </MiniMap>
            <Frame />
            <NoteArrow width="96" height="36" viewBox="0 0 96 36"><path d="M2 31 10.500 21.500l1.500 4L95 2 18 29l-4.500.5 2 4.500z" /></NoteArrow>
            <Note>设置蓝图交互</Note>
          </Blueprint>

          <BottomBar>
            <TabCell $w={120} $on><button>蓝图</button><button aria-label="menu"><MdMoreVert size={16} viewBox="2 2 20 20" /></button></TabCell>
            <AddButton aria-label="add"><MdAdd size={18} /></AddButton>
          </BottomBar>
        </Main>

        <Side>
          <Props>
            <Tabs $h={36} $size={14}><Tab $on>画布</Tab><Tab>通信</Tab></Tabs>
            <Form>
              <Field $h={31}><label htmlFor="bg">背景色</label><ColorInput id="bg" /></Field>
              <Field $h={30}><span>背景图</span><Upload><MdCloudUpload size={17} />上传图片</Upload></Field>
              <Field $h={36}><span>页面大小</span><Select name="页面大小" value="1920 * 1080" w="100%" h={36} size={14} /></Field>
              <Field $h={32}>
                <span>缩放方式</span>
                <ScaleModes>
                  <ScaleMode aria-label="original"><Icon w={1.500}><path d="M1 5.500V1h4.500M12.500 1H17v4.500M17 12.500V17h-4.500M5.500 17H1v-4.500M5.800 5.800h6.400v6.400H5.800z" /></Icon></ScaleMode>
                  <ScaleMode $on aria-label="fit"><Icon w={1.300}><rect x=".8" y=".8" width="16.400" height="16.400" rx="1.500" /><path d="M15.500 2.500 11 7M11 3v4h4M2.500 15.500 7 11M3 11h4v4" /></Icon></ScaleMode>
                </ScaleModes>
              </Field>
              <Field $h={28}>
                <label htmlFor="cover">自动生成封面</label>
                <CheckWrap><input id="cover" type="checkbox" defaultChecked /><Icon size={16} box={16} w={2}><path d="M3 8.200 6.500 11.700 13 4.500" /></Icon></CheckWrap>
              </Field>
            </Form>
          </Props>
          <List>
            <Tabs $h={30} $size={12}><Tab $on>列表</Tab><Tab>鹰眼</Tab><Expand aria-label="expand"><MdUnfoldMore size={16} /></Expand></Tabs>
            <Items>
              <Item>
                <CodeMark width="22" height="14" viewBox="0 0 22 14"><path d="M6 1 1.500 7 6 13l2-1.500L4.800 7 8 2.500zM16 1l4.500 6-4.500 6-2-1.500L17.200 7 14 2.500z" /></CodeMark>
                时间
              </Item>
              <Item><i>-</i>文本</Item>
            </Items>
            <SearchBox><input placeholder="搜索节点" aria-label="搜索节点" /><MdSearch size={18} /></SearchBox>
          </List>
        </Side>
      </Body>
    </Page>
  );
}
